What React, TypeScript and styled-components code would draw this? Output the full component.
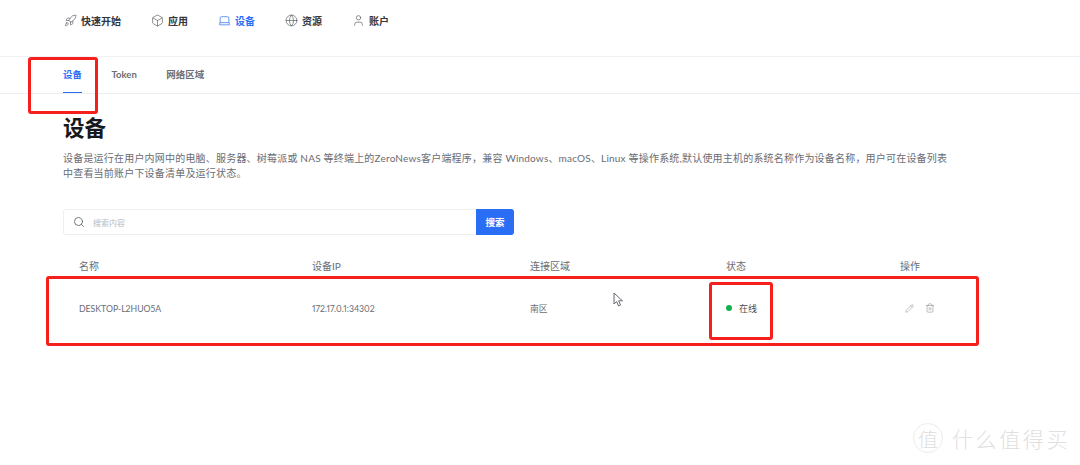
import styled, { createGlobalStyle } from "styled-components";
import { Box, Globe, Laptop, Pencil, Rocket, Search, Trash2, User } from "lucide-react";

const GlobalStyle = createGlobalStyle`
  html, body {
    margin: 0;
    padding: 0;
    background: #ffffff;
  }
  body {
    font-family: "Lato", "Noto Sans CJK SC", sans-serif;
  }
`;

const Page = styled.div`
  position: relative;
  width: 1080px;
  height: 465px;
  overflow: hidden;
  background: #fff;
`;

const TopNav = styled.nav`
  display: flex;
  align-items: center;
  height: 41px;
  padding-left: 64px;
  gap: 30px;
  margin-bottom: 15px;
`;

const NavItem = styled.div<{ $active?: boolean }>`
  display: flex;
  align-items: center;
  gap: 4px;
  font-size: 10px;
  font-weight: 700;
  line-height: 14px;
  color: ${(props) => (props.$active ? "#2b6ef6" : "#33363d")};
  svg {
    color: ${(props) => (props.$active ? "#2b6ef6" : "#5f6268")};
  }
`;

const Tabs = styled.div`
  display: flex;
  height: 36px;
  padding-left: 63px;
  gap: 29.5px;
  border-top: 1px solid #f1f2f4;
  border-bottom: 1px solid #eceef0;
`;

const Tab = styled.div<{ $active?: boolean }>`
  display: flex;
  align-items: center;
  height: 36px;
  box-sizing: border-box;
  padding-bottom: 1px;
  font-size: 9.5px;
  font-weight: 700;
  color: ${(props) => (props.$active ? "#2b6ef6" : "#6b6e74")};
  border-bottom: 1px solid ${(props) => (props.$active ? "#2b6ef6" : "transparent")};
`;

const Content = styled.main`
  padding: 20px 0 0 63px;
  width: 917px;
`;

const Title = styled.h1`
  margin: 0 0 9px;
  font-size: 21.5px;
  line-height: 28px;
  font-weight: 700;
  color: #17181b;
`;

const Description = styled.p`
  margin: 0 0 28px;
  width: 889px;
  font-size: 10px;
  line-height: 15px;
  letter-spacing: 0.2px;
  color: #6a6c72;
`;

const SearchBar = styled.div`
  display: flex;
  width: 451px;
  height: 26px;
  box-sizing: border-box;
  border: 1px solid #eceef0;
  border-radius: 3px;
  margin-bottom: 20px;
`;

const SearchInput = styled.div`
  flex: 1;
  display: flex;
  align-items: center;
  gap: 8px;
  padding-left: 9px;
  font-size: 8px;
  color: #b6bac2;
  svg {
    color: #55585e;
  }
`;

const SearchButton = styled.div`
  width: 38px;
  margin: -1px;
  display: flex;
  align-items: center;
  justify-content: center;
  background: #2b6ef6;
  border-radius: 0 3px 3px 0;
  color: #fff;
  font-size: 9.5px;
  font-weight: 700;
`;

const TableRow = styled.div<{ $height: number }>`
  display: grid;
  grid-template-columns: 233px 218px 196px 174px 1fr;
  align-items: center;
  height: ${(props) => props.$height}px;
  padding-left: 16px;
`;

const HeadCell = styled.div`
  font-size: 10px;
  color: #6a6c72;
`;

const Cell = styled.div`
  font-size: 8.7px;
  font-variant-numeric: proportional-nums;
  color: #6a6c72;
`;

const Status = styled.div`
  display: flex;
  align-items: center;
  gap: 7px;
  font-size: 9px;
  color: #4a4c52;
`;

const Dot = styled.span`
  width: 6px;
  height: 6px;
  border-radius: 50%;
  background: #12b04f;
`;

const Actions = styled.div`
  display: flex;
  align-items: center;
  gap: 11px;
  padding-left: 5px;
  color: #909296;
`;

const RedBox = styled.div<{ $x: number; $y: number; $w: number; $h: number }>`
  position: absolute;
  left: ${(props) => props.$x}px;
  top: ${(props) => props.$y}px;
  width: ${(props) => props.$w}px;
  height: ${(props) => props.$h}px;
  box-sizing: border-box;
  border: 3px solid #f5201c;
  border-radius: 3px;
`;

const Cursor = styled.svg`
  position: absolute;
  left: 613px;
  top: 292px;
`;

const Watermark = styled.div`
  position: absolute;
  right: 10px;
  bottom: 12px;
  display: flex;
  align-items: center;
  gap: 9px;
  color: #e0e0e0;
  font-size: 21px;
  font-weight: 300;
  letter-spacing: 2.6px;
`;

const WatermarkBadge = styled.span`
  display: flex;
  align-items: center;
  justify-content: center;
  width: 30px;
  height: 30px;
  box-sizing: border-box;
  border: 1px solid #ececec;
  border-radius: 50%;
  font-size: 20px;
  letter-spacing: 0;
`;

const navItems = [
  { label: "快速开始", Icon: Rocket },
  { label: "应用", Icon: Box },
  { label: "设备", Icon: Laptop, active: true },
  { label: "资源", Icon: Globe },
  { label: "账户", Icon: User },
];

const App = () => {
  return (
    <Page>
      <GlobalStyle />
      <TopNav>
        {navItems.map((item) => (
          <NavItem key={item.label} $active={item.active}>
            <item.Icon size={13} strokeWidth={1.3} />
            {item.label}
          </NavItem>
        ))}
      </TopNav>
      <Tabs>
        <Tab $active>设备</Tab>
        <Tab>Token</Tab>
        <Tab>网络区域</Tab>
      </Tabs>
      <Content>
        <Title>设备</Title>
        <Description>
          设备是运行在用户内网中的电脑、服务器、树莓派或 NAS 等终端上的ZeroNews客户端程序，兼容 Windows、macOS、Linux 等操作系统,默认使用主机的系统名称作为设备名称，用户可在设备列表中查看当前账户下设备清单及运行状态。
        </Description>
        <SearchBar>
          <SearchInput>
            <Search size={12} strokeWidth={1.6} />
            搜索内容
          </SearchInput>
          <SearchButton>搜索</SearchButton>
        </SearchBar>
        <TableRow $height={20}>
          <HeadCell>名称</HeadCell>
          <HeadCell>设备IP</HeadCell>
          <HeadCell>连接区域</HeadCell>
          <HeadCell>状态</HeadCell>
          <HeadCell>操作</HeadCell>
        </TableRow>
        <TableRow $height={66}>
          <Cell>DESKTOP-L2HUO5A</Cell>
          <Cell>172.17.0.1:34302</Cell>
          <Cell>南区</Cell>
          <Status>
            <Dot />
            在线
          </Status>
          <Actions>
            <Pencil size={9} strokeWidth={1.4} />
            <Trash2 size={10} strokeWidth={1.4} />
          </Actions>
        </TableRow>
      </Content>

      <RedBox $x={28} $y={57} $w={70} $h={57} />
      <RedBox $x={46} $y={276} $w={933} $h={70} />
      <RedBox $x={709} $y={282} $w={64} $h={58} />

      <Cursor width="11" height="15" viewBox="0 0 11 15">
        <path d="M1 1 L1 12 L3.6 9.6 L5.6 14 L7.6 13 L5.6 8.8 L9.4 8.8 Z" fill="#fff" stroke="#55585e" strokeWidth="0.9" />
      </Cursor>

      <Watermark>
        <WatermarkBadge>值</WatermarkBadge>
        什么值得买
      </Watermark>
    </Page>
  );
};

export default App;
